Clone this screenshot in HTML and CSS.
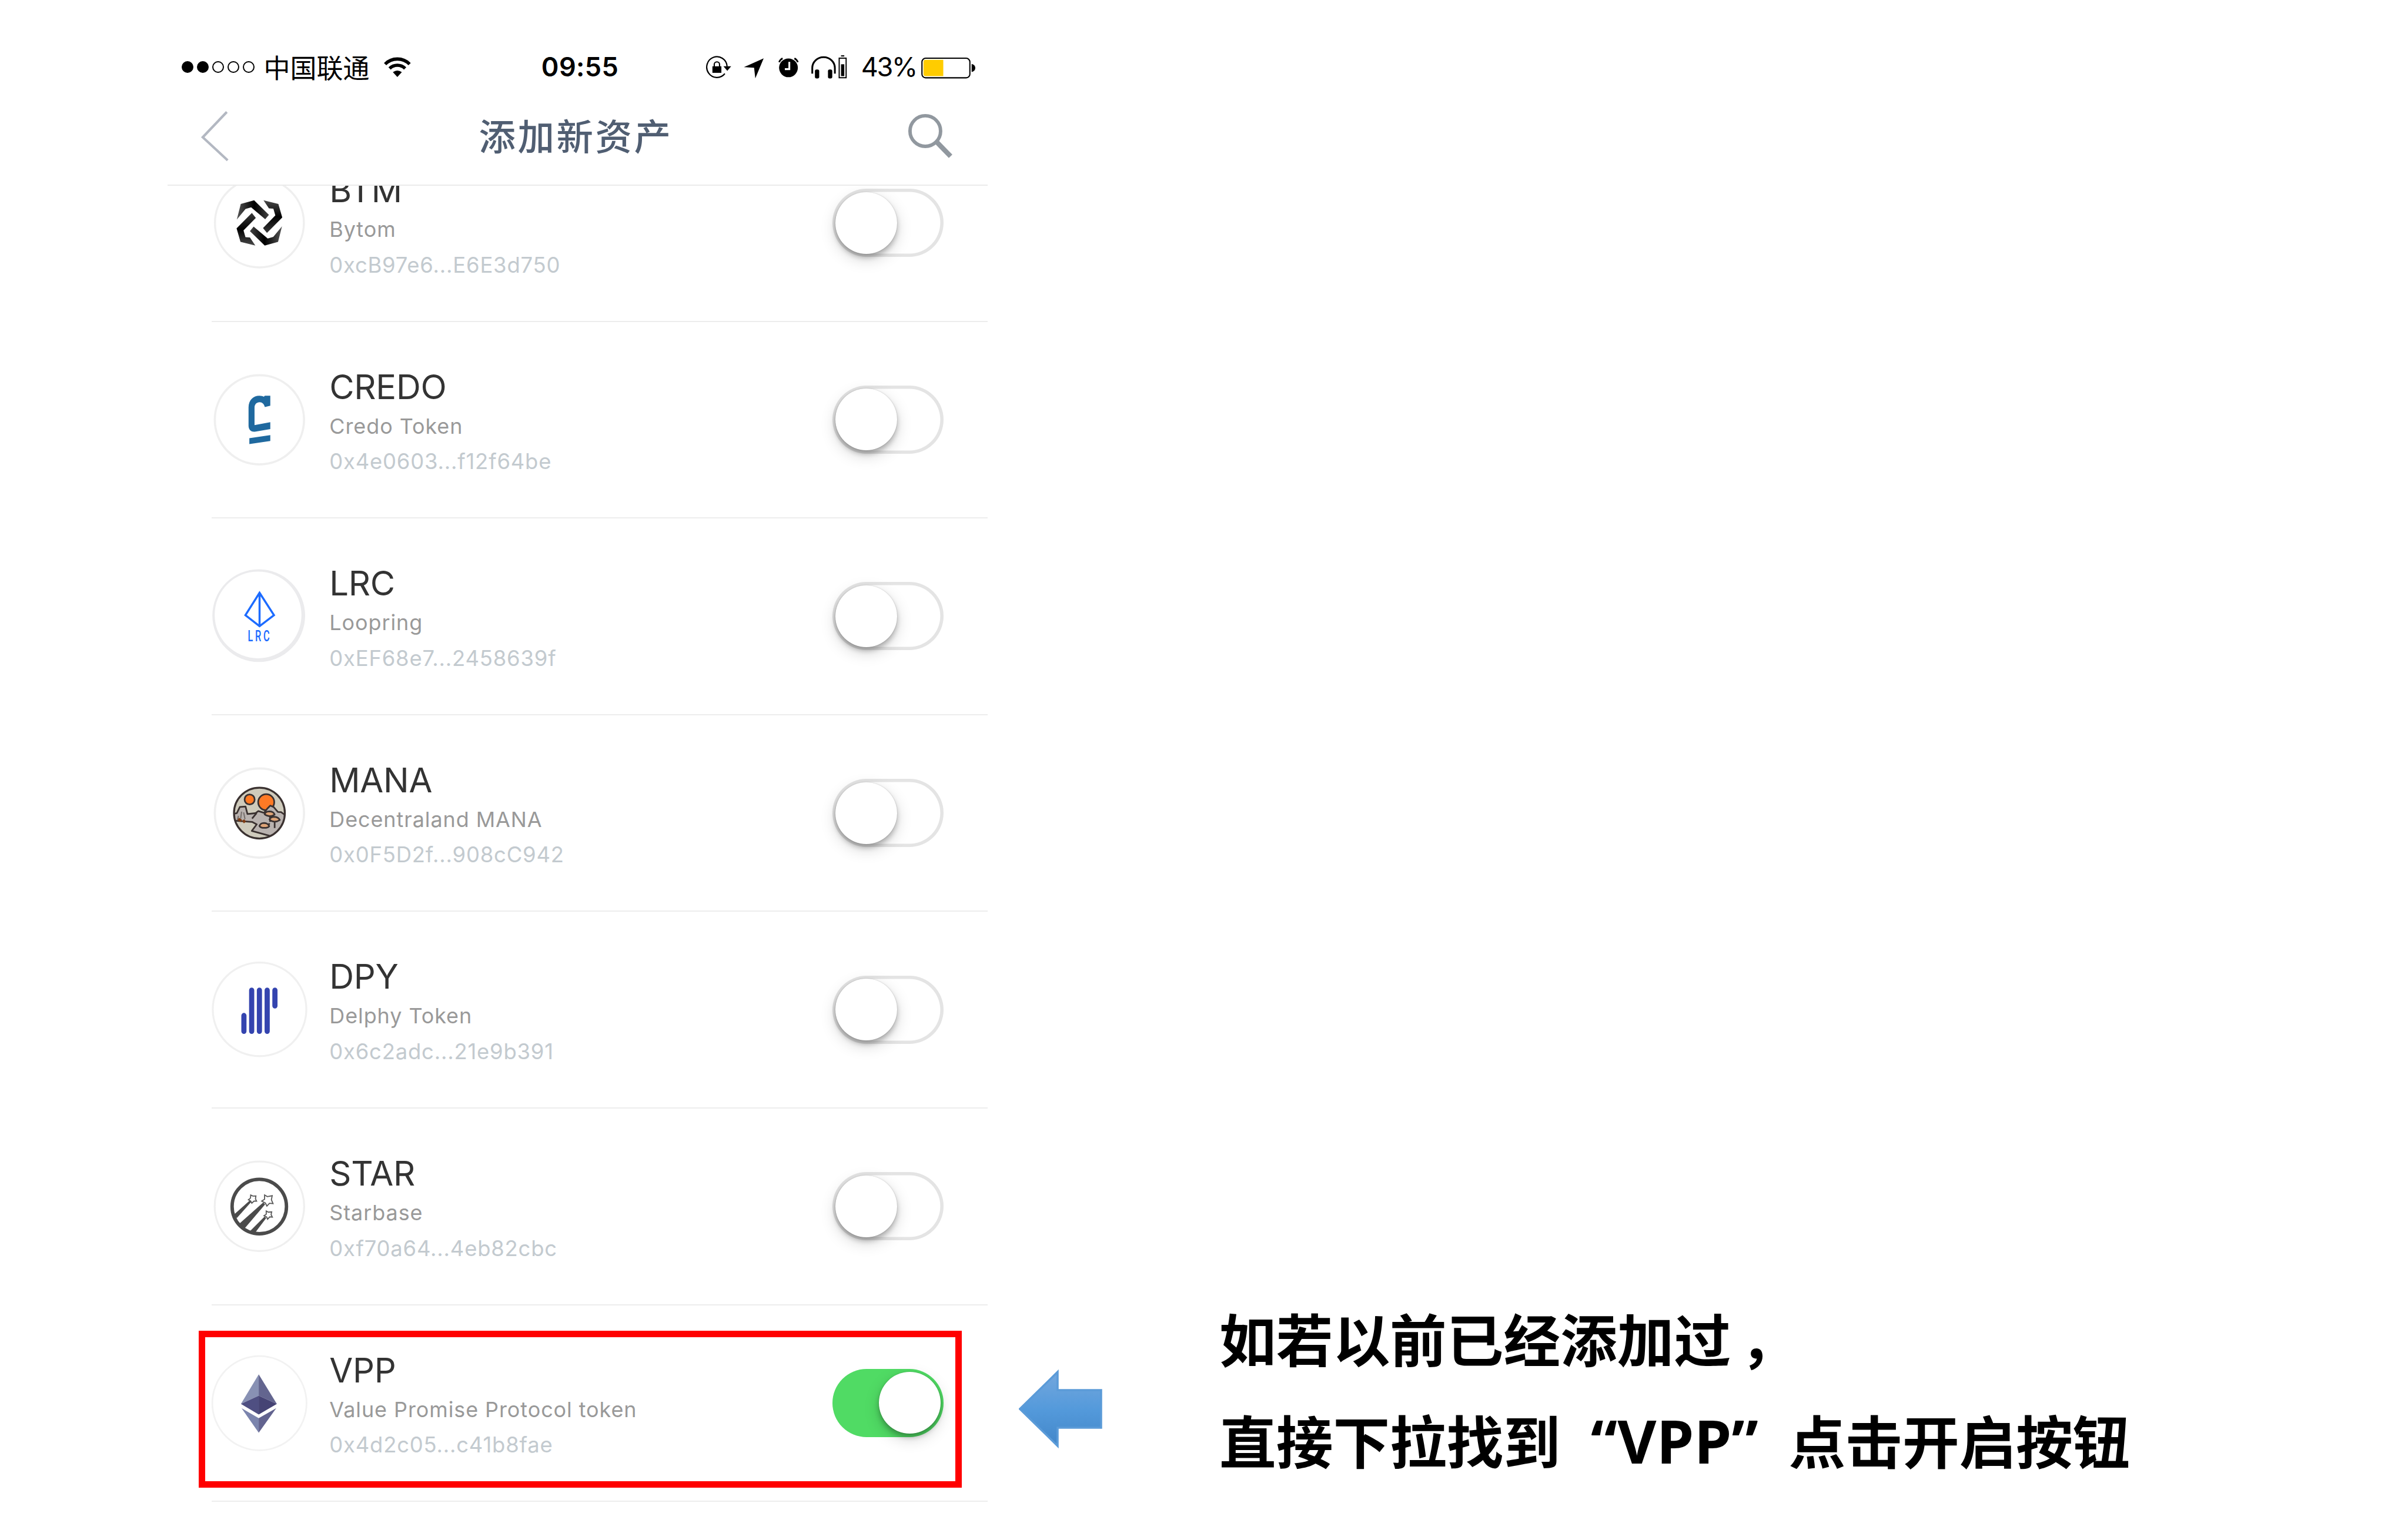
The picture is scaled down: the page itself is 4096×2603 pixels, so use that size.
FILE: index.html
```html
<!DOCTYPE html>
<html lang="zh-CN">
<head>
<meta charset="utf-8">
<title>添加新资产</title>
<link rel="stylesheet" href="styles.css">
</head>
<body>
<div class="page">
  <main class="phone">
    <header class="header">
      <div class="status">
        <div class="signal"><i class="dot full"></i><i class="dot full"></i><i class="dot"></i><i class="dot"></i><i class="dot"></i></div>
        <span class="carrier">中国联通</span>
        <svg class="wifi" viewBox="0 0 66 50">
          <path d="M3 17.500A42 42 0 0 1 63 17.500" fill="none" stroke="#000" stroke-width="8"/>
          <path d="M14 28A27 27 0 0 1 52 28" fill="none" stroke="#000" stroke-width="8"/>
          <path d="M33 49L22 37Q33 29 44 37Z"/>
        </svg>
        <span class="time">09:55</span>
        <div class="glyphs">
          <svg class="g-lock" viewBox="1730 130 70 64">
            <path d="M1783 160A25 25.500 0 1 0 1777.500 178" fill="none" stroke="#000" stroke-width="3.200"/>
            <path d="M1774 160H1793L1783.500 171Z"/>
            <rect x="1747" y="160" width="22" height="16"/>
            <path d="M1751.500 161V155.500A6.500 6.500 0 0 1 1764.500 155.500V161" fill="none" stroke="#000" stroke-width="3"/>
          </svg>
          <svg class="g-loc" viewBox="1800 130 100 64"><path d="M1873.500 140.500L1825 162L1850 163.500L1853 189.500Z"/></svg>
          <svg class="g-alarm" viewBox="1900 130 80 64">
            <circle cx="1933.400" cy="163.700" r="23"/>
            <path d="M1910.500 150A18 18 0 0 1 1919 140.500M1948 140.500A18 18 0 0 1 1956.500 150" fill="none" stroke="#000" stroke-width="4"/>
            <path d="M1935.500 149V167H1924.500" fill="none" stroke="#fff" stroke-width="4.500"/>
          </svg>
          <svg class="g-head" viewBox="1980 130 100 64">
            <path d="M1992.500 178V164A27.700 26.500 0 0 1 2047.900 164V178" fill="none" stroke="#000" stroke-width="4.400"/>
            <rect x="1999" y="168" width="10.500" height="22" rx="4"/>
            <rect x="2031" y="168" width="10.500" height="22" rx="4"/>
            <rect x="2058.500" y="140" width="17" height="48" fill="none" stroke="#000" stroke-width="2.800"/>
            <rect x="2063" y="133" width="8" height="3"/>
            <rect x="2063" y="155" width="8" height="29"/>
          </svg>
        </div>
        <span class="percent">43%</span>
        <svg class="battery" viewBox="2257 130 136 64">
          <rect x="2260.200" y="140.200" width="117.500" height="48" rx="9" fill="none" stroke="#000" stroke-width="3"/>
          <path d="M2269 144H2312.500V184H2269Q2264 184 2264 179V149Q2264 144 2269 144Z" fill="#fc0"/>
          <path d="M2382 154Q2391 156 2391 164Q2391 172 2382 174Z"/>
        </svg>
      </div>
      <nav class="nav">
        <svg class="back" viewBox="490 270 74 128"><path d="M556 275L497 337L558 393.500" fill="none" stroke="#b3b8c2" stroke-width="6"/></svg>
        <h1 class="title">添加新资产</h1>
        <svg class="search" viewBox="2222 276 116 116">
          <circle cx="2268" cy="322" r="37.500" fill="none" stroke="#91989f" stroke-width="8.500"/>
          <path d="M2295 348L2330 384" fill="none" stroke="#91989f" stroke-width="12"/>
        </svg>
      </nav>
    </header>

    <section class="list">
      <article class="row">
        <svg class="icon" viewBox="-120 -120 240 240">
          <circle r="109" fill="#fff" stroke="#efefef" stroke-width="5"/>
          <defs>
            <linearGradient id="facetA" x1="0" x2="1"><stop offset="0" stop-color="#555"/><stop offset=".55" stop-color="#000"/><stop offset="1" stop-color="#444"/></linearGradient>
            <linearGradient id="facetB" x1="0" y1="0" x2="0" y2="1"><stop offset="0" stop-color="#4a4a4a"/><stop offset=".5" stop-color="#000"/><stop offset="1" stop-color="#3a3a3a"/></linearGradient>
          </defs>
          <g id="knot">
            <path d="M-13-55.600L-45.700-46.600L-55.400-8.300L-34-34.300L-20.300-38.300L14.200-9L23.300-20Z" fill="url(#facetA)"/>
            <path d="M10-55.600L46.400-46.600L56-13.300L18.500 24.400L8.800 12.400L39-18.300L34.200-35L23.300-35.600Z" fill="url(#facetB)"/>
          </g>
          <use href="#knot" transform="rotate(180)"/>
        </svg>
        <div class="info"><h2 class="name">BTM</h2><p class="full-name">Bytom</p><p class="address">0xcB97e6...E6E3d750</p></div>
        <span class="toggle"><i class="knob"></i></span>
      </article>

      <article class="row">
        <svg class="icon" viewBox="46 31.600 720 720">
          <circle cx="406" cy="391.600" r="328" fill="#fff" stroke="#efefef" stroke-width="16"/>
          <path d="M486 214V288L446 298C440 275 426 262 408 262C385 262 370 278 370 302V430L486 409V460L372 479C342 482 326 462 326 435V300C326 245 362 214 405 214C420 214 432 217 438 222L446 214ZM332 527L486 504V547L332 570Z" fill="#1f699f"/>
        </svg>
        <div class="info"><h2 class="name">CREDO</h2><p class="full-name">Credo Token</p><p class="address">0x4e0603...f12f64be</p></div>
        <span class="toggle"><i class="knob"></i></span>
      </article>

      <article class="row">
        <svg class="icon" viewBox="46 38 720 720">
          <circle cx="401" cy="394" r="341" fill="#ebebed"/>
          <circle cx="396" cy="389" r="319" fill="#fff"/>
          <path d="M407 226L303 391L407 472L513 391ZM407 226V472" fill="none" stroke="#1c6bff" stroke-width="15"/>
          <text class="lrc-mark" x="321" y="584" textLength="176" lengthAdjust="spacingAndGlyphs">LRC</text>
        </svg>
        <div class="info"><h2 class="name">LRC</h2><p class="full-name">Loopring</p><p class="address">0xEF68e7...2458639f</p></div>
        <span class="toggle"><i class="knob"></i></span>
      </article>

      <article class="row">
        <svg class="icon" viewBox="46 45 720 720">
          <circle cx="406" cy="405" r="328" fill="#fff" stroke="#efefef" stroke-width="16"/>
          <defs><clipPath id="globe"><circle cx="406" cy="405" r="188"/></clipPath></defs>
          <g clip-path="url(#globe)" stroke="#3a3130" stroke-width="12" stroke-linejoin="round">
            <rect x="210" y="210" width="392" height="392" fill="#cfcbbc" stroke="none"/>
            <circle cx="334" cy="305" r="37" fill="#ff7a25"/>
            <circle cx="456" cy="325" r="59" fill="#ff7a25"/>
            <path d="M210 412L240 405L262 360L304 357L318 412L376 406L398 390L440 403L466 370L486 350L512 362L542 397L565 398L610 430V590L480 572L350 536L386 488L352 470L210 460Z" fill="#b9b2af"/>
            <path d="M386 404L352 445" fill="none"/>
            <path d="M275 395L268 445M290 400L300 450M252 425L244 455" fill="none" stroke="#77706d" stroke-width="9"/>
            <path d="M250 448L272 462M286 456L300 474" fill="none" stroke="#7d3a12" stroke-width="20"/>
            <path d="M484 430V470M518 465V515M470 500L480 480" fill="none"/>
            <path d="M444 414Q450 392 480 392Q512 394 518 416Q500 428 480 428Q458 427 444 414ZM480 452Q488 432 516 432Q546 434 556 456Q538 468 516 468Q492 466 480 452ZM406 500Q414 478 440 478Q470 480 478 502Q470 514 442 514Q414 514 406 500Z" fill="#dfa477"/>
          </g>
          <circle cx="406" cy="405" r="187" fill="none" stroke="#3a3130" stroke-width="14"/>
        </svg>
        <div class="info"><h2 class="name">MANA</h2><p class="full-name">Decentraland MANA</p><p class="address">0x0F5D2f...908cC942</p></div>
        <span class="toggle"><i class="knob"></i></span>
      </article>

      <article class="row">
        <svg class="icon" viewBox="46 51.700 720 720">
          <circle cx="407" cy="411.700" r="344" fill="#fff" stroke="#f0f0f0" stroke-width="14"/>
          <path d="M292 457V573M349 271V573M406 271V573M463 271V573M520 271V386" fill="none" stroke="#3444af" stroke-width="38" stroke-linecap="round"/>
        </svg>
        <div class="info"><h2 class="name">DPY</h2><p class="full-name">Delphy Token</p><p class="address">0x6c2adc...21e9b391</p></div>
        <span class="toggle"><i class="knob"></i></span>
      </article>

      <article class="row">
        <svg class="icon" viewBox="46 28 720 720">
          <circle cx="406" cy="388" r="329" fill="#fff" stroke="#efefef" stroke-width="14"/>
          <circle cx="405" cy="390" r="200" fill="none" stroke="#4b4b4b" stroke-width="25"/>
          <path d="M338 343L348 353L240 474L216 452ZM434 360L448 374L296 552L254 520ZM444 464L456 474L372 586L336 572Z" fill="#4b4b4b"/>
          <g fill="#fff" stroke="#5a5a5a" stroke-width="8">
            <path d="M342 305L358 313L380 312L377 333L385 350L366 350L350 365L342 350L325 340L340 328Z"/>
            <path d="M444 305L464 317L500 310L494 340L506 368L480 366L461 386L450 364L423 350L444 336Z"/>
            <path d="M456 423L472 431L496 429L492 449L501 468L482 466L466 483L459 466L440 457L456 446Z"/>
          </g>
        </svg>
        <div class="info"><h2 class="name">STAR</h2><p class="full-name">Starbase</p><p class="address">0xf70a64...4eb82cbc</p></div>
        <span class="toggle"><i class="knob"></i></span>
      </article>

      <article class="row">
        <svg class="icon" viewBox="-120 -120 240 240">
          <circle r="115.500" fill="#fff" stroke="#f2f2f2" stroke-width="4"/>
          <path d="M-1.700-70.600L-45.300 1.600L-1.700-18.400Z" fill="#8891b4"/>
          <path d="M-1.700-70.600L42.700 1.600L-1.700-18.400Z" fill="#63658f"/>
          <path d="M-1.700-18.400L-45.300 1.600L-1.700 27.700Z" fill="#4f4f82"/>
          <path d="M-1.700-18.400L42.700 1.600L-1.700 27.700Z" fill="#454374"/>
          <path d="M-43.800 12.300L-1.700 36.600V72.400Z" fill="#7b84ad"/>
          <path d="M41.200 12.300L-1.700 36.600V72.400Z" fill="#62638f"/>
        </svg>
        <div class="info"><h2 class="name">VPP</h2><p class="full-name">Value Promise Protocol token</p><p class="address">0x4d2c05...c41b8fae</p></div>
        <span class="toggle on"><i class="knob"></i></span>
        <span class="highlight"></span>
      </article>
    </section>
  </main>

  <aside class="note">
    <svg class="arrow" viewBox="0 0 142 136">
      <defs><linearGradient id="arrowFill" x1="0" y1="0" x2="0" y2="1"><stop offset="0" stop-color="#74a7dd"/><stop offset=".5" stop-color="#549adb"/><stop offset="1" stop-color="#4286c9"/></linearGradient></defs>
      <path d="M1.800 68L66 5V36H140V100H66V131Z" fill="url(#arrowFill)" stroke="#5b9bd8" stroke-width="3.500"/>
    </svg>
    <div class="note-text">
      <p class="line">如若以前已经添加过<span class="comma">，</span></p>
      <p class="line">直接下拉找到<span class="quote open">“</span><span class="latin">VPP</span><span class="quote close">”</span>点击开启按钮</p>
    </div>
  </aside>
</div>
</body>
</html>
```
FILE: styles.css
```css
* { box-sizing: border-box; margin: 0; padding: 0; }

body {
  width: 4096px;
  height: 2603px;
  overflow: hidden;
  background: #fff;
  color: #000;
  font-family: Inter, "Noto Sans CJK SC", sans-serif;
}

svg { display: block; flex: none; }

.page {
  display: flex;
  height: 2603px;
  padding-left: 285px;
}

.phone {
  display: flex;
  flex-direction: column;
  width: 1395px;
  height: 2603px;
}

/* Header */
.header {
  flex: none;
  height: 316px;
  border-bottom: 2px solid #ebebeb;
}

.status {
  display: flex;
  align-items: center;
  height: 68px;
  margin-top: 80px;
  padding-left: 24px;
  white-space: nowrap;
}

.signal { display: flex; gap: 5.6px; width: 125px; }
.dot { width: 20.4px; height: 20.4px; border: 2px solid #000; border-radius: 50%; }
.dot.full { background: #000; }

.carrier {
  width: 180px;
  margin-left: 14.5px;
  font: 400 45px/66px "Noto Sans CJK SC", sans-serif;
}

.wifi { width: 45.8px; height: 34.7px; margin-left: 24.5px; }

.time {
  width: 140px;
  margin-left: 222px;
  font-size: 45px;
  font-weight: 600;
  line-height: 68px;
  letter-spacing: .4px;
}

.glyphs { display: flex; margin-left: 139px; }
.glyphs svg { height: 44.4px; }
.g-lock { width: 48.6px; }
.g-loc { width: 69.4px; }
.g-alarm { width: 55.5px; }
.g-head { width: 69.4px; }

.percent {
  width: 92px;
  margin-left: 22px;
  font-size: 45px;
  line-height: 68px;
  letter-spacing: -2.3px;
}

.battery { width: 94.4px; height: 44.4px; margin-left: 9px; }

.nav {
  display: flex;
  align-items: center;
  justify-content: space-between;
  height: 130px;
  margin-top: 18px;
  padding: 0 57px 0 55px;
}

.back { width: 51.4px; height: 88.8px; }

.title {
  padding: 0 0 5px 25px;
  color: #505e72;
  font: 500 62.5px/125px "Noto Sans CJK SC", sans-serif;
  letter-spacing: 3.5px;
}

.search { width: 80.5px; height: 80.5px; }

/* Token list */
.list {
  flex: 1;
  min-height: 0;
  overflow: hidden;
}

.row {
  position: relative;
  display: flex;
  align-items: center;
  height: 334.6px;
  margin-left: 75px;
  padding-right: 75.5px;
  border-bottom: 2px solid #ededed;
}
.row:first-child { margin-top: -103px; }

.icon { width: 166.56px; height: 166.56px; margin-left: -2.3px; }

.lrc-mark {
  fill: #1c6bff;
  font: 500 108px Roboto, sans-serif;
  letter-spacing: 24px;
}

.info { flex: 1; padding: 8px 0 0 36px; white-space: nowrap; }

.name {
  color: #333;
  font-size: 58px;
  font-weight: 400;
  line-height: 75px;
  letter-spacing: -.3px;
}

.full-name {
  color: #999;
  font-size: 36px;
  line-height: 59.5px;
  letter-spacing: .9px;
}

.address {
  color: #c3cacf;
  font-size: 36.5px;
  line-height: 60px;
  letter-spacing: .75px;
}

.toggle {
  display: flex;
  flex: none;
  align-items: center;
  width: 188.5px;
  height: 116px;
  padding: 0 5px;
  border-radius: 58px;
  background: #fff;
  box-shadow: inset 0 0 0 5.6px #e4e4e4;
}

.knob {
  width: 105px;
  height: 105px;
  border-radius: 50%;
  background: #fff;
  box-shadow: 0 9px 26px rgba(0, 0, 0, .17), 0 6px 9px rgba(0, 0, 0, .24), 0 0 2px rgba(0, 0, 0, .2);
}

.toggle.on {
  justify-content: flex-end;
  background: #50db64;
  box-shadow: none;
}

.highlight {
  position: absolute;
  top: 43px;
  left: -22px;
  width: 1298px;
  height: 267px;
  border: 11px solid #f00;
}

/* Side note */
.note {
  display: flex;
  align-items: flex-start;
  margin-left: 53px;
  padding-top: 2189px;
}

.arrow { width: 142px; height: 136px; margin-top: 140px; }

.note-text { margin-left: 199px; }

.line {
  font: 700 96.7px/173.4px "Noto Sans CJK SC", sans-serif;
  white-space: nowrap;
}

.comma { margin-left: 16px; }

.latin, .quote {
  font-family: "Open Sans", sans-serif;
  font-size: 102px;
  line-height: 1;
}

.quote { display: inline-block; width: 97px; }
.quote.open { text-align: right; }
```
